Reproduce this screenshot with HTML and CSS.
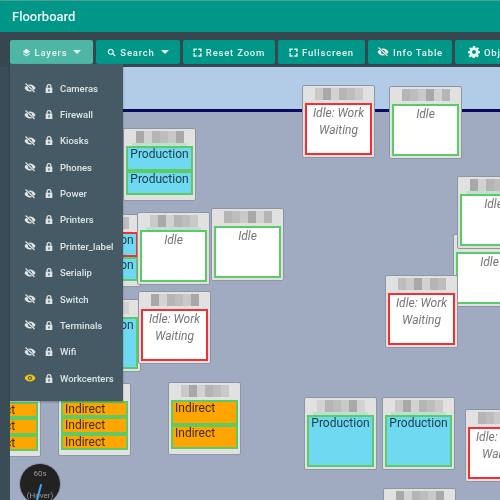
FILE: index.html
```html
<!DOCTYPE html>
<html lang="en">
<head>
  <meta charset="UTF-8">
  <meta name="viewport" content="width=device-width, initial-scale=1.0">
  <title>Floorboard</title>
  <link rel="stylesheet" href="styles.css">
</head>
<body>

<div class="page">
  <header class="topbar">Floorboard</header>

  <nav class="toolbar">
    <button class="tool tool-layers">
      <svg class="tool-icon" viewBox="0 0 24 24"><path d="M12 2 2 9l10 7 10-7zM4 14l-2 1.500 10 7 10-7-2-1.500-8 5.500z"/></svg>
      Layers <span class="caret"></span>
    </button>
    <button class="tool tool-search">
      <svg class="tool-icon" viewBox="0 0 24 24"><path d="M10 2a8 8 0 1 0 4.600 14.500l6 6 2.400-2.400-6-6A8 8 0 0 0 10 2zm0 3a5 5 0 1 1 0 10 5 5 0 0 1 0-10z"/></svg>
      Search <span class="caret"></span>
    </button>
    <button class="tool tool-reset">
      <svg class="tool-icon" viewBox="0 0 24 24"><path d="M1 1h9v4H5v5H1zM14 1h9v9h-4V5h-5zM1 14h4v5h5v4H1zM19 14h4v9h-9v-4h5z"/></svg>
      Reset Zoom
    </button>
    <button class="tool tool-full">
      <svg class="tool-icon" viewBox="0 0 24 24"><path d="M1 1h9v4H5v5H1zM14 1h9v9h-4V5h-5zM1 14h4v5h5v4H1zM19 14h4v9h-9v-4h5z"/></svg>
      Fullscreen
    </button>
    <button class="tool tool-info">
      <svg class="tool-icon tool-icon-wide" viewBox="0 0 24 24"><use href="#eye-off"/></svg>
      Info Table
    </button>
    <button class="tool tool-objects">
      <svg class="tool-icon tool-icon-wide" viewBox="0 0 24 24"><path fill-rule="evenodd" d="M10 1h4l.600 3 2.300 1 2.600-1.700 2.800 2.800L20 8.700l1 2.300 3 .600v4l-3 .600-1 2.300 1.700 2.600-2.800 2.800-2.600-1.700-2.300 1-.600 2.800h-4l-.600-2.800-2.300-1-2.600 1.700-2.800-2.800L4 18.500l-1-2.300-3-.600v-4l3-.600 1-2.300-1.700-2.600 2.800-2.800L7.100 5l2.300-1zM12 9a4 4 0 1 0 0 8 4 4 0 0 0 0-8z" transform="translate(0 -1)"/></svg>
      Objects
    </button>
  </nav>

  <main class="canvas" id="canvas">
    <div class="sky"></div>
    <div class="gauge">
      <span class="gauge-top">60s</span>
      <span class="gauge-needle"></span>
      <span class="gauge-bottom">(Hover)</span>
    </div>
  </main>

  <aside class="side-strip"></aside>

  <ul class="layers-menu" id="layersMenu"></ul>
</div>

<svg class="sprites" width="0" height="0">
  <symbol id="eye-off" viewBox="0 0 24 24">
    <path d="M12 5C7 5 3 8 1 12c2 4 6 7 11 7s9-3 11-7c-2-4-6-7-11-7zm0 3a4 4 0 1 1 0 8 4 4 0 0 1 0-8z"/>
    <path d="M3 3l18 17" stroke="#455a64" stroke-width="4.500" fill="none"/>
    <path d="M3 3l18 17" stroke="currentColor" stroke-width="2.200" fill="none"/>
  </symbol>
  <symbol id="eye" viewBox="0 0 24 24">
    <path d="M12 5C7 5 3 8 1 12c2 4 6 7 11 7s9-3 11-7c-2-4-6-7-11-7zm0 3a4 4 0 1 1 0 8 4 4 0 0 1 0-8zm0 2a2 2 0 1 0 0 4 2 2 0 0 0 0-4z"/>
  </symbol>
  <symbol id="lock" viewBox="0 0 24 24">
    <path d="M12 1a6 6 0 0 0-6 6v3H4v13h16V10h-2V7a6 6 0 0 0-6-6zm0 3a3 3 0 0 1 3 3v3H9V7a3 3 0 0 1 3-3zm0 10a2 2 0 0 1 1 3.700V20h-2v-2.300A2 2 0 0 1 12 14z"/>
  </symbol>
</svg>

<script>
  const layers = ['Cameras', 'Firewall', 'Kiosks', 'Phones', 'Power', 'Printers', 'Printer_label',
    'Serialip', 'Switch', 'Terminals', 'Wifi', 'Workcenters'];

  // x, y on the floor (page px minus toolbar), outline colour, fill, rows of text
  const cards = [
    { x: 302, y: 18, line: 'red', state: 'idle', rows: ['Idle: Work Waiting'] },
    { x: 389, y: 19, line: 'green', state: 'idle', rows: ['Idle'] },
    { x: 123, y: 61, line: 'green', state: 'prod', tint: true, rows: ['Production', 'Production'] },
    { x: 68, y: 147, line: 'red', state: 'prod', rows: ['Production', 'Production'], lines: ['red', 'green'] },
    { x: 68, y: 232, line: 'green', state: 'prod', rows: ['Production'] },
    { x: 137, y: 145, line: 'green', state: 'idle', tint: true, rows: ['Idle'] },
    { x: 211, y: 141, line: 'green', state: 'idle', rows: ['Idle'] },
    { x: 138, y: 224, line: 'red', state: 'idle', rows: ['Idle: Work Waiting'] },
    { x: -32, y: 317, line: 'green', state: 'ind', rows: ['Indirect', 'Indirect', 'Indirect'] },
    { x: 58, y: 316, line: 'green', state: 'ind', rows: ['Indirect', 'Indirect', 'Indirect'] },
    { x: 168, y: 315, line: 'green', state: 'ind', rows: ['Indirect', 'Indirect'] },
    { x: 453, y: 167, line: 'green', state: 'idle', rows: ['Idle'] },
    { x: 457, y: 109, line: 'green', state: 'idle', tint: true, rows: ['Idle'] },
    { x: 385, y: 208, line: 'red', state: 'idle', rows: ['Idle: Work Waiting'] },
    { x: 304, y: 330, line: 'green', state: 'prod', tint: true, rows: ['Production'] },
    { x: 382, y: 330, line: 'green', state: 'prod', tint: true, rows: ['Production'] },
    { x: 465, y: 342, line: 'red', state: 'idle', rows: ['Idle: Work Waiting'] },
    { x: 383, y: 421, line: 'green', state: 'idle', rows: ['Idle'] }
  ];

  const canvas = document.getElementById('canvas');
  const menu = document.getElementById('layersMenu');
  const greys = ['#c9c9c9', '#b5b5b5', '#a8a8a8', '#bdbdbd', '#d2d2d2'];

  cards.forEach(function (card, n) {
    const el = document.createElement('div');
    el.className = 'card';
    el.style.left = card.x + 'px';
    el.style.top = card.y + 'px';

    // the machine names are blurred out in the screenshot
    let smudge = '';
    for (let i = 0; i < 6; i++) {
      smudge += `<i style="background:${greys[(n + i * 2) % greys.length]}"></i>`;
    }

    const rows = card.rows.map(function (text, i) {
      const line = card.lines ? card.lines[i] : card.line;
      return `<div class="row row-${card.state} line-${line}">${text}</div>`;
    }).join('');

    const bodyClass = card.rows.length > 1 ? 'card-body is-split' : 'card-body';
    el.innerHTML = `<div class="card-head ${card.tint ? 'is-tinted' : ''}">${smudge}</div><div class="${bodyClass}">${rows}</div>`;
    canvas.appendChild(el);
  });

  layers.forEach(function (name) {
    const on = name === 'Workcenters';
    const li = document.createElement('li');
    li.className = 'layer';
    li.innerHTML = `
      <svg class="layer-eye ${on ? 'is-on' : ''}" viewBox="0 0 24 24"><use href="#${on ? 'eye' : 'eye-off'}"/></svg>
      <svg class="layer-lock" viewBox="0 0 24 24"><use href="#lock"/></svg>
      <span>${name}</span>
    `;
    menu.appendChild(li);
  });
</script>

</body>
</html>
```
FILE: styles.css
```css
html, body {
  margin: 0;
  height: 100%;
  overflow: hidden;
}

body {
  font-family: Roboto, "Liberation Sans", sans-serif;
  background: #a0aac0;
}

.page {
  position: relative;
  width: 500px;
  height: 500px;
  overflow: hidden;
  display: flex;
  flex-direction: column;
  filter: blur(0.4px);
}

.topbar {
  height: 32px;
  box-sizing: border-box;
  flex: none;
  padding: 8px 0 0 12px;
  background: #009688;
  border-top: 1px solid #4a9e92;
  color: #eef7f5;
  font-size: 13px;
  font-weight: 500;
  line-height: 16px;
}

.toolbar {
  height: 35px;
  box-sizing: border-box;
  flex: none;
  display: flex;
  gap: 3px;
  padding: 8px 0 0 10px;
  background: #37474f;
}

.tool {
  flex: none;
  height: 24px;
  padding: 0;
  display: flex;
  align-items: center;
  justify-content: center;
  gap: 4px;
  border: 0;
  border-radius: 2px;
  background: #009688;
  color: #e6f4f1;
  font-family: inherit;
  font-size: 9.500px;
  font-weight: 500;
  letter-spacing: 0.8px;
}

.tool-layers { width: 83px; background: #4db6a5; }
.tool-search { width: 84px; }
.tool-reset { width: 92px; }
.tool-full { width: 87px; }
.tool-info { width: 84px; }
.tool-objects { width: 80px; }

.tool-icon {
  width: 9px;
  height: 9px;
  fill: currentColor;
}

.tool-icon-wide {
  width: 12px;
  height: 12px;
}

.caret {
  width: 0;
  height: 0;
  margin-left: 2px;
  border-left: 4px solid transparent;
  border-right: 4px solid transparent;
  border-top: 4px solid currentColor;
}

.sprites {
  position: absolute;
}

.canvas {
  position: relative;
  flex: 1;
  background: #a0aac0;
}

.sky {
  height: 42px;
  background: #b2cbe6;
  border-bottom: 3px solid #0a0a5e;
}

.card {
  position: absolute;
  width: 73px;
  height: 73px;
  box-sizing: border-box;
  padding: 0 2px;
  display: flex;
  flex-direction: column;
  background: #e1e1e1;
  border: 1px solid #8f96a3;
  border-radius: 2px;
}

.card-head {
  height: 17px;
  flex: none;
  display: flex;
  justify-content: center;
  padding: 2px 4px 3px;
  box-sizing: border-box;
}

.card-head.is-tinted {
  margin: 0 6px;
  padding: 2px 0 3px;
  box-shadow: inset 0 -3px 0 #bfdfd2;
}

.card-head i {
  width: 8px;
  height: 100%;
}

.card-body {
  height: 52px;
  flex: none;
  display: flex;
  flex-direction: column;
}

.card-body.is-split {
  height: 49px;
}

.row {
  flex: 1;
  box-sizing: border-box;
  text-align: center;
  font-size: 12px;
  line-height: 13px;
  min-height: 0;
  overflow: hidden;
}

.line-green { border: 2px solid #5ccb66; }
.line-red { border: 2px solid #f52f2f; }

.row-idle {
  background: #fff;
  color: #777;
  font-style: italic;
  line-height: 17px;
}

.row-prod {
  background: #70d9f2;
  color: #1c3a46;
}

.row-ind {
  background: #ffa500;
  color: #3f2a00;
  text-align: left;
  padding-left: 2px;
}

.gauge {
  position: absolute;
  left: 19px;
  top: 396px;
  width: 42px;
  height: 42px;
  box-sizing: border-box;
  border-radius: 50%;
  background: #222;
  border: 1px solid #8f9ab0;
  color: #999;
  font-size: 8px;
  text-align: center;
}

.gauge-top {
  position: absolute;
  left: 0;
  right: 0;
  top: 5px;
}

.gauge-bottom {
  position: absolute;
  left: 0;
  right: 0;
  top: 27px;
}

.gauge-needle {
  position: absolute;
  left: 18px;
  top: 20px;
  width: 2px;
  height: 17px;
  background: #3fa7f0;
  transform: rotate(15deg);
}

.side-strip {
  position: absolute;
  left: 0;
  top: 67px;
  bottom: 0;
  width: 10px;
  background: #3a4c55;
}

.layers-menu {
  position: absolute;
  left: 10px;
  top: 64px;
  width: 113px;
  height: 337px;
  box-sizing: border-box;
  margin: 0;
  padding: 11px 0 0 14px;
  list-style: none;
  background: #455a64;
  box-shadow: 0 1px 2px rgba(0, 0, 0, 0.3);
}

.layer {
  height: 26.360px;
  display: flex;
  align-items: center;
  color: #dfe5e7;
  font-size: 9.500px;
  font-weight: 500;
}

.layer-eye {
  width: 12px;
  height: 12px;
  margin-right: 8px;
  fill: currentColor;
}

.layer-eye.is-on {
  color: #f2c40f;
}

.layer-lock {
  width: 10px;
  height: 11px;
  margin-right: 6px;
  fill: currentColor;
}
```
